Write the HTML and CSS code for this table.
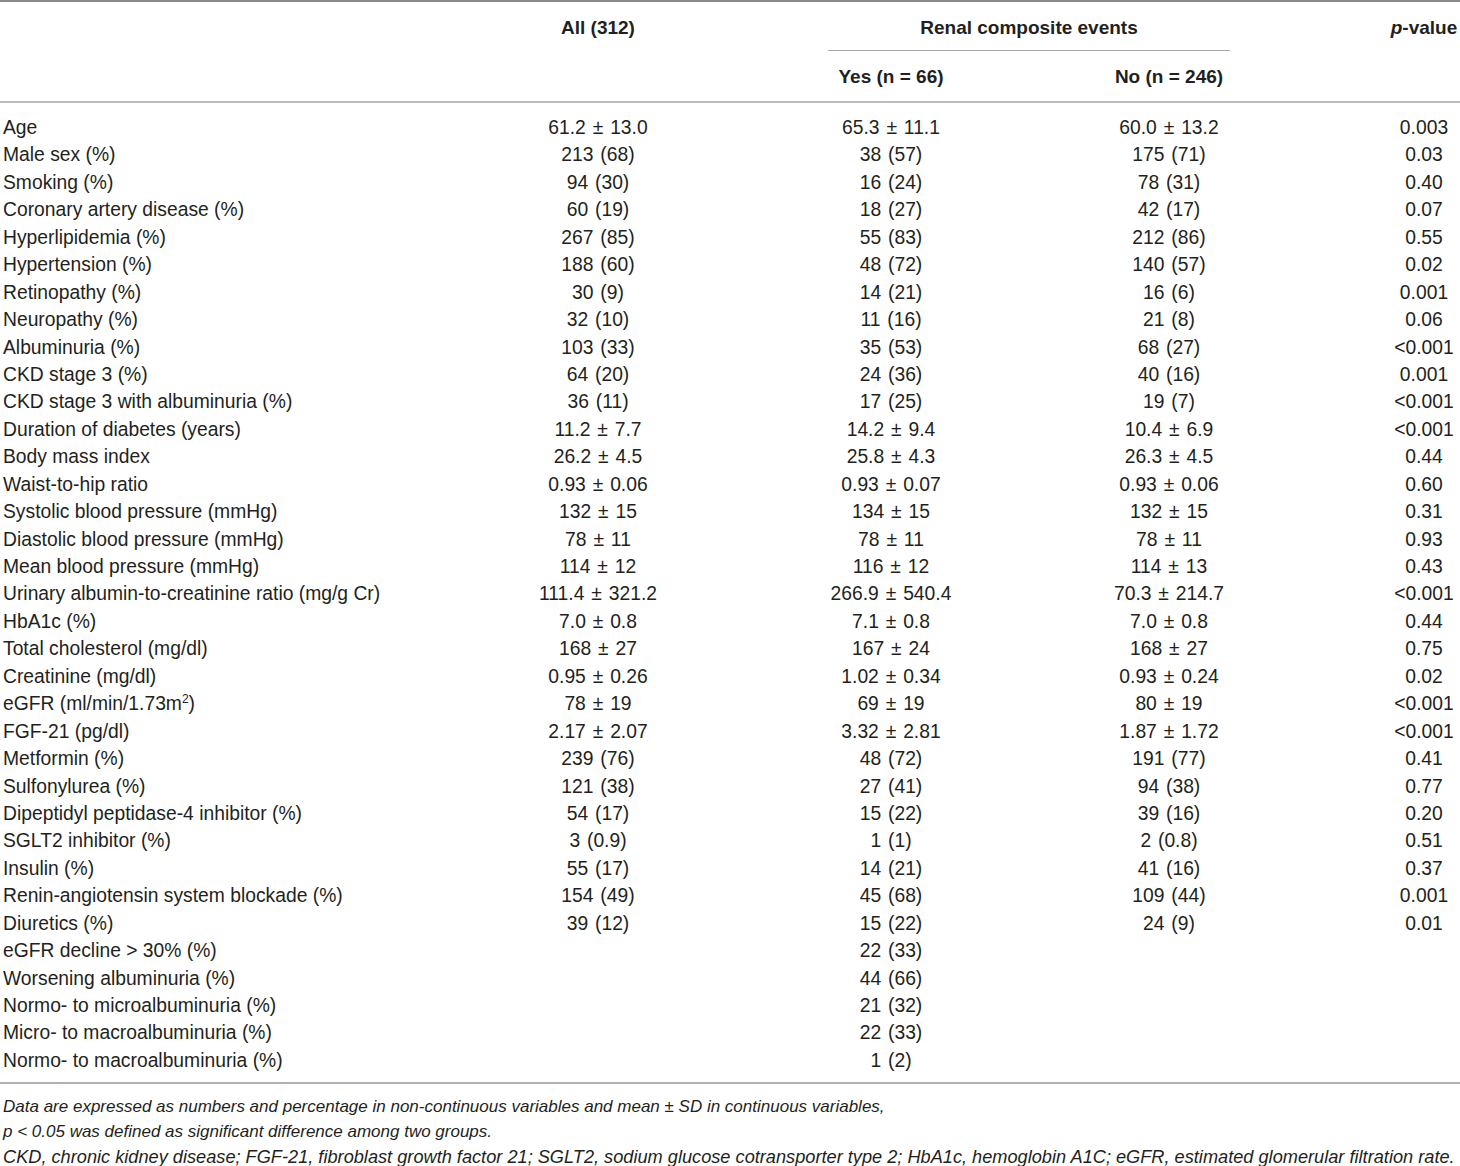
FILE: index.html
```html
<!DOCTYPE html>
<html>
<head>
<meta charset="utf-8">
<link rel="stylesheet" href="styles.css">
</head>
<body>
<div class="wrap">
<table class="tbl">
<colgroup>
<col class="c-label"><col class="c-all"><col class="c-yes"><col class="c-no"><col class="c-p">
</colgroup>
<thead>
<tr class="h1">
<th></th>
<th class="num">All (312)</th>
<th colspan="2" class="grp"><div class="grp-line">Renal composite events</div></th>
<th class="pv"><i>p</i>-value</th>
</tr>
<tr class="h2">
<th></th>
<th></th>
<th class="yes">Yes (n = 66)</th>
<th class="no">No (n = 246)</th>
<th></th>
</tr>
</thead>
<tbody>
<tr class="first"><td>Age</td><td>61.2 ± 13.0</td><td>65.3 ± 11.1</td><td>60.0 ± 13.2</td><td>0.003</td></tr>
<tr><td>Male sex (%)</td><td>213 (68)</td><td>38 (57)</td><td>175 (71)</td><td>0.03</td></tr>
<tr><td>Smoking (%)</td><td>94 (30)</td><td>16 (24)</td><td>78 (31)</td><td>0.40</td></tr>
<tr><td>Coronary artery disease (%)</td><td>60 (19)</td><td>18 (27)</td><td>42 (17)</td><td>0.07</td></tr>
<tr><td>Hyperlipidemia (%)</td><td>267 (85)</td><td>55 (83)</td><td>212 (86)</td><td>0.55</td></tr>
<tr><td>Hypertension (%)</td><td>188 (60)</td><td>48 (72)</td><td>140 (57)</td><td>0.02</td></tr>
<tr><td>Retinopathy (%)</td><td>30 (9)</td><td>14 (21)</td><td>16 (6)</td><td>0.001</td></tr>
<tr><td>Neuropathy (%)</td><td>32 (10)</td><td>11 (16)</td><td>21 (8)</td><td>0.06</td></tr>
<tr><td>Albuminuria (%)</td><td>103 (33)</td><td>35 (53)</td><td>68 (27)</td><td>&lt;0.001</td></tr>
<tr><td>CKD stage 3 (%)</td><td>64 (20)</td><td>24 (36)</td><td>40 (16)</td><td>0.001</td></tr>
<tr><td>CKD stage 3 with albuminuria (%)</td><td>36 (11)</td><td>17 (25)</td><td>19 (7)</td><td>&lt;0.001</td></tr>
<tr><td>Duration of diabetes (years)</td><td>11.2 ± 7.7</td><td>14.2 ± 9.4</td><td>10.4 ± 6.9</td><td>&lt;0.001</td></tr>
<tr><td>Body mass index</td><td>26.2 ± 4.5</td><td>25.8 ± 4.3</td><td>26.3 ± 4.5</td><td>0.44</td></tr>
<tr><td>Waist-to-hip ratio</td><td>0.93 ± 0.06</td><td>0.93 ± 0.07</td><td>0.93 ± 0.06</td><td>0.60</td></tr>
<tr><td>Systolic blood pressure (mmHg)</td><td>132 ± 15</td><td>134 ± 15</td><td>132 ± 15</td><td>0.31</td></tr>
<tr><td>Diastolic blood pressure (mmHg)</td><td>78 ± 11</td><td>78 ± 11</td><td>78 ± 11</td><td>0.93</td></tr>
<tr><td>Mean blood pressure (mmHg)</td><td>114 ± 12</td><td>116 ± 12</td><td>114 ± 13</td><td>0.43</td></tr>
<tr><td>Urinary albumin-to-creatinine ratio (mg/g Cr)</td><td>111.4 ± 321.2</td><td>266.9 ± 540.4</td><td>70.3 ± 214.7</td><td>&lt;0.001</td></tr>
<tr><td>HbA1c (%)</td><td>7.0 ± 0.8</td><td>7.1 ± 0.8</td><td>7.0 ± 0.8</td><td>0.44</td></tr>
<tr><td>Total cholesterol (mg/dl)</td><td>168 ± 27</td><td>167 ± 24</td><td>168 ± 27</td><td>0.75</td></tr>
<tr><td>Creatinine (mg/dl)</td><td>0.95 ± 0.26</td><td>1.02 ± 0.34</td><td>0.93 ± 0.24</td><td>0.02</td></tr>
<tr><td>eGFR (ml/min/1.73m<sup>2</sup>)</td><td>78 ± 19</td><td>69 ± 19</td><td>80 ± 19</td><td>&lt;0.001</td></tr>
<tr><td>FGF-21 (pg/dl)</td><td>2.17 ± 2.07</td><td>3.32 ± 2.81</td><td>1.87 ± 1.72</td><td>&lt;0.001</td></tr>
<tr><td>Metformin (%)</td><td>239 (76)</td><td>48 (72)</td><td>191 (77)</td><td>0.41</td></tr>
<tr><td>Sulfonylurea (%)</td><td>121 (38)</td><td>27 (41)</td><td>94 (38)</td><td>0.77</td></tr>
<tr><td>Dipeptidyl peptidase-4 inhibitor (%)</td><td>54 (17)</td><td>15 (22)</td><td>39 (16)</td><td>0.20</td></tr>
<tr><td>SGLT2 inhibitor (%)</td><td>3 (0.9)</td><td>1 (1)</td><td>2 (0.8)</td><td>0.51</td></tr>
<tr><td>Insulin (%)</td><td>55 (17)</td><td>14 (21)</td><td>41 (16)</td><td>0.37</td></tr>
<tr><td>Renin-angiotensin system blockade (%)</td><td>154 (49)</td><td>45 (68)</td><td>109 (44)</td><td>0.001</td></tr>
<tr><td>Diuretics (%)</td><td>39 (12)</td><td>15 (22)</td><td>24 (9)</td><td>0.01</td></tr>
<tr><td>eGFR decline &gt; 30% (%)</td><td></td><td>22 (33)</td><td></td><td></td></tr>
<tr><td>Worsening albuminuria (%)</td><td></td><td>44 (66)</td><td></td><td></td></tr>
<tr><td>Normo- to microalbuminuria (%)</td><td></td><td>21 (32)</td><td></td><td></td></tr>
<tr><td>Micro- to macroalbuminuria (%)</td><td></td><td>22 (33)</td><td></td><td></td></tr>
<tr class="last"><td>Normo- to macroalbuminuria (%)</td><td></td><td>1 (2)</td><td></td><td></td></tr>
</tbody>
</table>
<div class="notes">
<p>Data are expressed as numbers and percentage in non-continuous variables and mean ± SD in continuous variables,</p>
<p>p &lt; 0.05 was defined as significant difference among two groups.</p>
<p class="wide">CKD, chronic kidney disease; FGF-21, fibroblast growth factor 21; SGLT2, sodium glucose cotransporter type 2; HbA1c, hemoglobin A1C; eGFR, estimated glomerular filtration rate.</p>
</div>
</div>
</body>
</html>
```

FILE: styles.css
```css
html, body {
  margin: 0;
  padding: 0;
  background: #ffffff;
}
body {
  font-family: "Liberation Sans", Arial, sans-serif;
  color: #231f20;
}
.wrap {
  width: 1460px;
}
.tbl {
  width: 1460px;
  border-collapse: collapse;
  table-layout: fixed;
  font-size: 19.3px;
  border-top: 2px solid #8a8a8a;
}
.c-label { width: 470px; }
.c-all { width: 256px; }
.c-yes { width: 330px; }
.c-no { width: 226px; }
.c-p { width: 178px; }

.tbl th {
  font-weight: bold;
  text-align: center;
  padding: 0;
  white-space: nowrap;
  font-size: 19px;
}
.h1 th {
  height: 50px;
  vertical-align: top;
  padding-top: 15px;
  box-sizing: border-box;
}
.h2 th {
  height: 49px;
  border-bottom: 2px solid #bdbdbd;
  vertical-align: middle;
  padding-top: 1px;
}
.grp-line {
  margin: 0 52px 0 102px;
  border-bottom: 1.5px solid #a8a8a8;
  padding-bottom: 11px;
}
.tbl th.pv, .tbl td:nth-child(5) {
  padding-left: 106px;
  text-align: center;
}
.tbl td {
  padding: 0;
  height: 27.44px;
  line-height: 27.44px;
  text-align: center;
  white-space: nowrap;
  word-spacing: 1.5px;
}
.tbl td:first-child {
  text-align: left;
  padding-left: 3px;
  word-spacing: 0;
}
.tbl tr.first td {
  padding-top: 11px;
}
.tbl tr.last td {
  padding-bottom: 8px;
}
.tbl tbody {
  border-bottom: 2px solid #b0b0b0;
}
sup {
  font-size: 12px;
  line-height: 0;
}
.notes {
  font-style: italic;
  font-size: 17px;
  padding: 11px 0 0 3px;
  width: 1457px;
}
.notes p {
  margin: 0;
  line-height: 24.5px;
  white-space: nowrap;
}
.notes p.wide {
  font-size: 18.2px;
  line-height: 26px;
}
```
